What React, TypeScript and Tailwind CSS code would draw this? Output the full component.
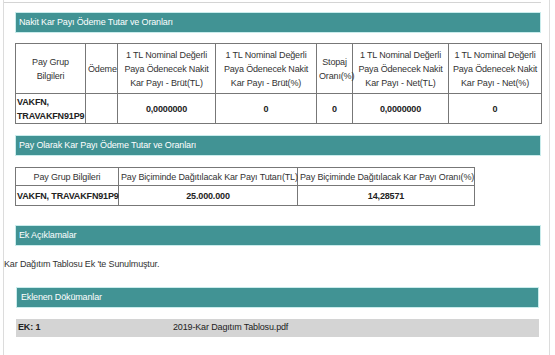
import React from "react";

const Header = ({ title, className = "" }: { title: string; className?: string }) => (
  <div
    className={`h-[21px] bg-[#419394] border border-[#c9ecec] flex items-center pl-[3px] text-white text-[9px] tracking-[-0.15px] ${className}`}
  >
    {title}
  </div>
);

export default function App() {
  const th = "border border-[#777] font-normal text-[#333] text-[9px] leading-[14px] text-center align-middle px-[2px]";
  const td = "border border-[#777] font-bold text-[#222] text-[9px] leading-[14px] text-center align-middle";
  return (
    <div
      className="w-[555px] h-[355px] bg-white overflow-hidden"
      style={{ fontFamily: '"Liberation Sans", Arial, sans-serif' }}
    >
      <div className="ml-[3px] w-[547px] h-[355px] border-l border-r border-[#dcdcdc]">
        <div className="w-[537px] h-[3px] border-b border-[#d4d4d4]" />
        <div className="pl-[11px] w-[537px]">
          <Header title="Nakit Kar Payı Ödeme Tutar ve Oranları" className="mt-[9px]" />
          <table className="mt-[10px] w-[526px] border-collapse table-fixed tracking-[-0.15px]">
            <colgroup>
              <col className="w-[70px]" />
              <col className="w-[32px]" />
              <col className="w-[98px]" />
              <col className="w-[101px]" />
              <col className="w-[36px]" />
              <col className="w-[96px]" />
              <col className="w-[93px]" />
            </colgroup>
            <thead>
              <tr className="h-[50px]">
                <th className={th}>Pay Grup Bilgileri</th>
                <th className={`${th} px-0`}>Ödeme</th>
                <th className={th}>1 TL Nominal Değerli Paya Ödenecek Nakit Kar Payı - Brüt(TL)</th>
                <th className={th}>1 TL Nominal Değerli Paya Ödenecek Nakit Kar Payı - Brüt(%)</th>
                <th className={`${th} px-0`}>Stopaj Oranı(%)</th>
                <th className={th}>1 TL Nominal Değerli Paya Ödenecek Nakit Kar Payı - Net(TL)</th>
                <th className={th}>1 TL Nominal Değerli Paya Ödenecek Nakit Kar Payı - Net(%)</th>
              </tr>
            </thead>
            <tbody>
              <tr className="h-[30px]">
                <td className={`${td} text-left pl-[1px]`}>VAKFN, TRAVAKFN91P9</td>
                <td className={td}></td>
                <td className={td}>0,0000000</td>
                <td className={td}>0</td>
                <td className={td}>0</td>
                <td className={td}>0,0000000</td>
                <td className={td}>0</td>
              </tr>
            </tbody>
          </table>

          <Header title="Pay Olarak Kar Payı Ödeme Tutar ve Oranları" className="mt-[11px]" />
          <table className="mt-[11px] w-[459px] border-collapse table-fixed tracking-[-0.15px]">
            <colgroup>
              <col className="w-[103px]" />
              <col className="w-[179px]" />
              <col className="w-[177px]" />
            </colgroup>
            <tbody>
              <tr className="h-[18px]">
                <td className={`${th} px-0`}>Pay Grup Bilgileri</td>
                <td className={`${th} px-0 whitespace-nowrap`}>Pay Biçiminde Dağıtılacak Kar Payı Tutarı(TL)</td>
                <td className={`${th} px-0 whitespace-nowrap`}>Pay Biçiminde Dağıtılacak Kar Payı Oranı(%)</td>
              </tr>
              <tr className="h-[20px]">
                <td className={`${td} text-left pl-[1px] whitespace-nowrap`}>VAKFN, TRAVAKFN91P9</td>
                <td className={td}>25.000.000</td>
                <td className={td}>14,28571</td>
              </tr>
            </tbody>
          </table>

          <Header title="Ek Açıklamalar" className="mt-[19px]" />
        </div>
        <div className="mt-[11px] h-[14px] text-[9px] leading-[14px] text-[#333] tracking-[-0.15px]">
          Kar Dağıtım Tablosu Ek 'te Sunulmuştur.
        </div>
        <div className="pl-[12px] w-[535px]">
          <Header title="Eklenen Dökümanlar" className="mt-[16px] pl-[4px]" />
          <div className="mt-[11px] h-[18px] bg-[#d4d4d4] flex items-center text-[9px] text-[#222] tracking-[-0.15px]">
            <span className="w-[157px] pl-[2px] font-bold">EK: 1</span>
            <span>2019-Kar Dagıtım Tablosu.pdf</span>
          </div>
        </div>
      </div>
    </div>
  );
}
